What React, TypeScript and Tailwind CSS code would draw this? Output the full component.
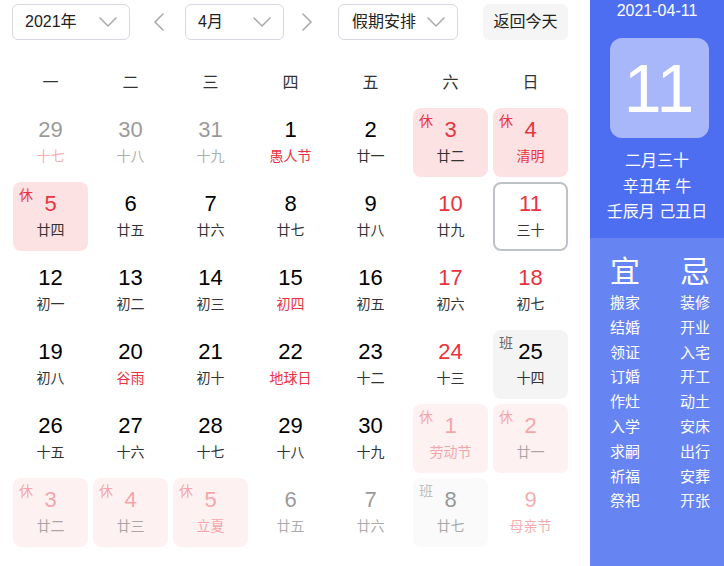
import React from 'react';

type Day = {
  n: number;
  lunar: string;
  red?: boolean; // number in red
  lunarRed?: boolean;
  tag?: '休' | '班';
  other?: boolean; // outside current month
  today?: boolean;
};

const DAYS: Day[] = [
  { n: 29, lunar: '十七', other: true, lunarRed: true },
  { n: 30, lunar: '十八', other: true },
  { n: 31, lunar: '十九', other: true },
  { n: 1, lunar: '愚人节', lunarRed: true },
  { n: 2, lunar: '廿一' },
  { n: 3, lunar: '廿二', red: true, tag: '休' },
  { n: 4, lunar: '清明', red: true, lunarRed: true, tag: '休' },

  { n: 5, lunar: '廿四', red: true, tag: '休' },
  { n: 6, lunar: '廿五' },
  { n: 7, lunar: '廿六' },
  { n: 8, lunar: '廿七' },
  { n: 9, lunar: '廿八' },
  { n: 10, lunar: '廿九', red: true },
  { n: 11, lunar: '三十', red: true, today: true },

  { n: 12, lunar: '初一' },
  { n: 13, lunar: '初二' },
  { n: 14, lunar: '初三' },
  { n: 15, lunar: '初四', lunarRed: true },
  { n: 16, lunar: '初五' },
  { n: 17, lunar: '初六', red: true },
  { n: 18, lunar: '初七', red: true },

  { n: 19, lunar: '初八' },
  { n: 20, lunar: '谷雨', lunarRed: true },
  { n: 21, lunar: '初十' },
  { n: 22, lunar: '地球日', lunarRed: true },
  { n: 23, lunar: '十二' },
  { n: 24, lunar: '十三', red: true },
  { n: 25, lunar: '十四', tag: '班' },

  { n: 26, lunar: '十五' },
  { n: 27, lunar: '十六' },
  { n: 28, lunar: '十七' },
  { n: 29, lunar: '十八' },
  { n: 30, lunar: '十九' },
  { n: 1, lunar: '劳动节', red: true, lunarRed: true, tag: '休', other: true },
  { n: 2, lunar: '廿一', red: true, tag: '休', other: true },

  { n: 3, lunar: '廿二', red: true, tag: '休', other: true },
  { n: 4, lunar: '廿三', red: true, tag: '休', other: true },
  { n: 5, lunar: '立夏', red: true, lunarRed: true, tag: '休', other: true },
  { n: 6, lunar: '廿五', other: true },
  { n: 7, lunar: '廿六', other: true },
  { n: 8, lunar: '廿七', tag: '班', other: true },
  { n: 9, lunar: '母亲节', red: true, lunarRed: true, other: true },
];

const WEEK = ['一', '二', '三', '四', '五', '六', '日'];
const YI = ['搬家', '结婚', '领证', '订婚', '作灶', '入学', '求嗣', '祈福', '祭祀'];
const JI = ['装修', '开业', '入宅', '开工', '动土', '安床', '出行', '安葬', '开张'];

const Caret = () => (
  <svg width="18" height="10" viewBox="0 0 18 10" fill="none" className="text-[#a8a8a8]">
    <polyline points="1,1 9,9 17,1" stroke="currentColor" strokeWidth="1.5" strokeLinejoin="round" strokeLinecap="round" />
  </svg>
);

const Arrow = ({ dir }: { dir: 'l' | 'r' }) => (
  <svg width="12" height="18" viewBox="0 0 12 18" fill="none" className="text-[#a8a8a8]">
    <polyline
      points={dir === 'l' ? '10,1 2,9 10,17' : '2,1 10,9 2,17'}
      stroke="currentColor"
      strokeWidth="1.6"
      strokeLinejoin="round"
      strokeLinecap="round"
    />
  </svg>
);

function Select({ label, width }: { label: string; width: string }) {
  return (
    <div className={`flex h-9 items-center justify-between rounded-md border border-[#d7d9e0] pl-3 pr-3 text-base text-[#222] ${width}`}>
      <span>{label}</span>
      <Caret />
    </div>
  );
}

function Cell({ d }: { d: Day }) {
  let bg = '';
  if (d.tag === '休') bg = d.other ? 'bg-[#fef1f2]' : 'bg-[#fde2e3]';
  if (d.tag === '班') bg = d.other ? 'bg-[#fafafa]' : 'bg-[#f4f4f5]';
  const border = d.today ? 'border-2 border-[#bfc1c8]' : '';
  return (
    <div className={`relative flex h-[69px] flex-col items-center rounded-lg ${bg} ${border} ${d.today ? 'pt-2' : 'pt-[10px]'}`}>
      {d.tag && (
        <span
          className={`absolute left-[6px] top-[3px] text-sm leading-5 ${d.tag === '休' ? 'text-[#e9343f]' : 'text-[#666]'} ${d.other ? 'opacity-40' : ''}`}
        >
          {d.tag}
        </span>
      )}
      <div className={`flex flex-col items-center ${d.other ? 'opacity-40' : ''}`}>
        <span className={`text-[22px] leading-6 ${d.red ? 'text-[#e9343f]' : 'text-black'}`}>{d.n}</span>
        <span className={`mt-1 text-sm leading-5 ${d.lunarRed ? 'text-[#e9343f]' : 'text-[#333]'}`}>{d.lunar}</span>
      </div>
    </div>
  );
}

export default function App() {
  return (
    <div className="flex h-[566px] w-[724px] overflow-hidden bg-white font-['Liberation_Sans','Noto_Sans_CJK_SC',sans-serif]">
      <div className="w-[590px] pl-[12px] pt-[4px]">
        <div className="flex items-center">
          <Select label="2021年" width="w-[118px]" />
          <div className="ml-[23px]">
            <Arrow dir="l" />
          </div>
          <div className="ml-[20px]">
            <Select label="4月" width="w-[99px]" />
          </div>
          <div className="ml-[17px]">
            <Arrow dir="r" />
          </div>
          <div className="ml-[25px]">
            <div className="flex h-9 w-[120px] items-center justify-between rounded-md border border-[#d7d9e0] pl-[13px] pr-3 text-base text-[#222]">
              <span>假期安排</span>
              <Caret />
            </div>
          </div>
          <div className="ml-[25px] flex h-9 w-[85px] items-center justify-center rounded-md bg-[#f5f5f6] text-base text-[#222]">
            返回今天
          </div>
        </div>

        <div className="ml-[1px] mt-[28px] grid h-[30px] grid-cols-[repeat(7,75px)] gap-x-[5px] text-base leading-[30px] text-[#333]">
          {WEEK.map((w) => (
            <div key={w} className="text-center">
              {w}
            </div>
          ))}
        </div>

        <div className="ml-[1px] mt-[10px] grid grid-cols-[repeat(7,75px)] gap-x-[5px] gap-y-[5px]">
          {DAYS.map((d, i) => (
            <Cell key={i} d={d} />
          ))}
        </div>
      </div>

      <div className="flex w-[134px] flex-col text-white">
        <div className="flex h-[238px] flex-col items-center bg-[#4e6ef2]">
          <div className="mt-[1px] text-base leading-5">2021-04-11</div>
          <div className="ml-[4px] mt-[17px] flex h-[100px] w-[99px] items-center justify-center rounded-xl bg-[#a7b7f9] text-[68px] leading-none">
            11
          </div>
          <div className="mt-[10px] flex flex-col items-center text-base leading-[25.5px]">
            <span>二月三十</span>
            <span>辛丑年 牛</span>
            <span>壬辰月 己丑日</span>
          </div>
        </div>
        <div className="flex flex-1 bg-[#6785f2] pl-[20px] pt-[16px]">
          <div className="flex w-[70px] flex-col">
            <span className="text-[30px] leading-[36px]">宜</span>
            <div className="mt-[1px] flex flex-col text-[15px] leading-[24.8px]">
              {YI.map((s) => (
                <span key={s}>{s}</span>
              ))}
            </div>
          </div>
          <div className="flex flex-col">
            <span className="text-[30px] leading-[36px]">忌</span>
            <div className="mt-[1px] flex flex-col text-[15px] leading-[24.8px]">
              {JI.map((s) => (
                <span key={s}>{s}</span>
              ))}
            </div>
          </div>
        </div>
      </div>
    </div>
  );
}
